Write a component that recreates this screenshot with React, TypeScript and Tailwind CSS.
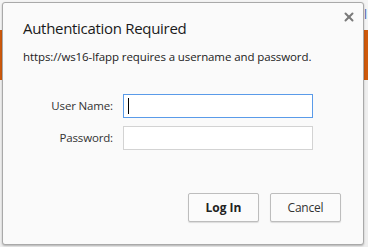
import { X } from 'lucide-react';

export default function App() {
  return (
    <div className="relative w-[368px] h-[247px] overflow-hidden bg-[#f1f1f1]" style={{ fontFamily: '"Open Sans", "Noto Sans", sans-serif' }}>
      {/* page behind the dialog */}
      <div className="flex flex-col h-full">
        <div className="h-[30px] bg-[#f4f4f4] flex justify-end items-center pr-[1px] text-[12px] text-[#3a5fb0]">
          <span>sl</span>
        </div>
        <div className="h-[50px] bg-[#cf5a0c]" />
        <div className="flex-1 bg-[#efefef]" />
      </div>

      {/* dialog */}
      <div className="absolute left-[2px] top-[2px] w-[362px] h-[243px] bg-[#fafafa] border border-[#a9a9a9] rounded-[3px] shadow-[0_1px_2px_rgba(0,0,0,0.25)] flex flex-col">
        <button className="absolute right-[7px] top-[7px] text-[#7a7a7a] leading-none">
          <X size={14} strokeWidth={3.4} />
        </button>
        <div className="pl-[20px] pt-[14px] text-[15px] tracking-[-0.3px] text-[#1a1a1a] leading-[22px]">Authentication Required</div>
        <div className="pl-[20px] pt-[10px] text-[11.5px] tracking-[-0.1px] text-[#222] leading-[16px]">
          https://ws16-lfapp requires a username and password.
        </div>

        <div className="mt-[29px] grid grid-cols-[110px_190px] gap-x-[10px] gap-y-[8px] items-center text-[11.5px] tracking-[-0.15px] text-[#333]">
          <label className="text-right">User Name:</label>
          <div className="h-[24px] bg-white border border-[#5a9be9] flex items-center pl-[4px]">
            <span className="w-[1px] h-[16px] bg-black" />
          </div>
          <label className="text-right">Password:</label>
          <div className="h-[24px] bg-white border border-[#d3d3d3]" />
        </div>

        <div className="mt-auto mb-[22px] flex justify-end gap-[11px] pr-[22px]">
          <button className="w-[71px] h-[29px] bg-[#fbfbfb] border border-[#bdbdbd] rounded-[2px] shadow-[0_1px_1px_rgba(0,0,0,0.12)] text-[12px] font-bold text-[#222]">
            Log In
          </button>
          <button className="w-[71px] h-[29px] bg-[#fbfbfb] border border-[#bdbdbd] rounded-[2px] shadow-[0_1px_1px_rgba(0,0,0,0.12)] text-[12px] tracking-[-0.2px] text-[#333]">
            Cancel
          </button>
        </div>
      </div>
    </div>
  );
}
